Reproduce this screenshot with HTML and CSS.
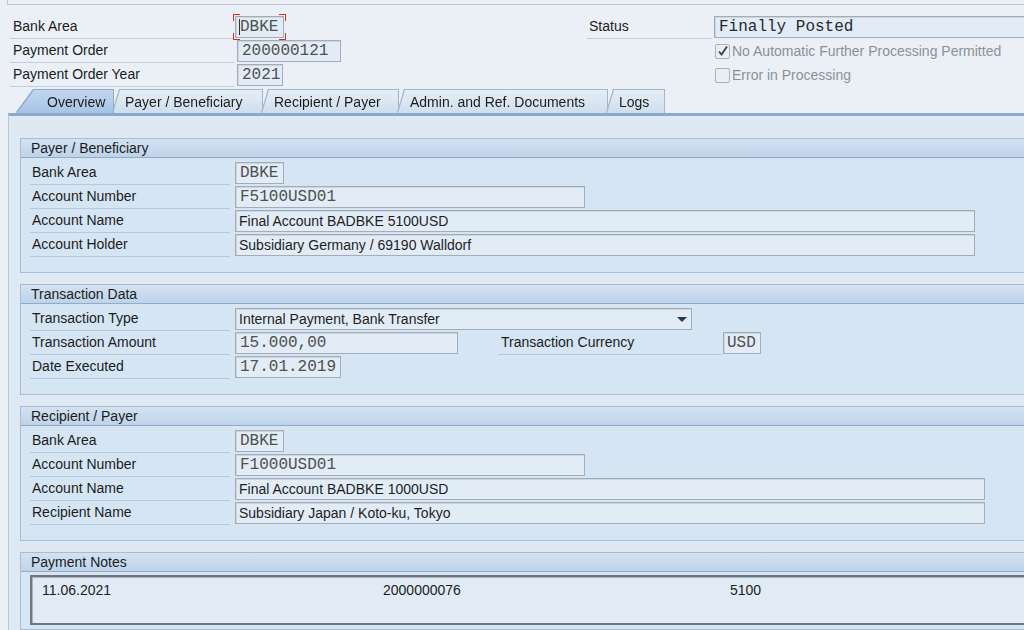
FILE: index.html
```html
<!DOCTYPE html>
<html>
<head>
	<meta charset="utf-8">
	<title>Payment Order</title>
	<link rel="stylesheet" href="styles.css">
</head>
<body>
	<div class="topbar"></div>
	<div class="header">
		<div class="hcol">
			<div class="hrow">
				<span class="hlabel">Bank Area</span>
				<span class="field mono w-area focus"><span class="caret"></span>DBKE</span>
			</div>
			<div class="hrow">
				<span class="hlabel">Payment Order</span>
				<span class="field mono w-order ml3">200000121</span>
			</div>
			<div class="hrow">
				<span class="hlabel">Payment Order Year</span>
				<span class="field mono w-year ml3">2021</span>
			</div>
		</div>
		<div class="hcol hcol-right">
			<div class="hrow">
				<span class="hlabel hlabel-status">Status</span>
				<span class="field mono w-status">Finally Posted</span>
			</div>
			<div class="hrow check">
				<span class="box">
					<svg width="12" height="12" viewBox="0 0 12 12"><path d="M2 6.5 L4.6 9.5 L10 1.5" fill="none" stroke="#3a3f47" stroke-width="1.8"/></svg>
				</span>
				No Automatic Further Processing Permitted
			</div>
			<div class="hrow check">
				<span class="box"></span>
				Error in Processing
			</div>
		</div>
	</div>

	<div class="tabs">
		<div class="tab active t-overview"><span>Overview</span></div>
		<div class="tab t-payer"><span>Payer / Beneficiary</span></div>
		<div class="tab t-recipient"><span>Recipient / Payer</span></div>
		<div class="tab t-admin"><span>Admin. and Ref. Documents</span></div>
		<div class="tab t-logs"><span>Logs</span></div>
	</div>

	<div class="panel">
		<div class="group">
			<div class="group-head">Payer / Beneficiary</div>
			<div class="group-body">
				<div class="frow">
					<span class="flabel">Bank Area</span>
					<span class="field mono w-area">DBKE</span>
				</div>
				<div class="frow">
					<span class="flabel">Account Number</span>
					<span class="field mono w-acc">F5100USD01</span>
				</div>
				<div class="frow">
					<span class="flabel">Account Name</span>
					<span class="field w-name">Final Account BADBKE 5100USD</span>
				</div>
				<div class="frow">
					<span class="flabel">Account Holder</span>
					<span class="field w-name">Subsidiary Germany / 69190 Walldorf</span>
				</div>
			</div>
		</div>

		<div class="group">
			<div class="group-head">Transaction Data</div>
			<div class="group-body">
				<div class="frow">
					<span class="flabel">Transaction Type</span>
					<span class="field w-type">Internal Payment, Bank Transfer<span class="arrow"></span></span>
				</div>
				<div class="frow">
					<span class="flabel">Transaction Amount</span>
					<span class="field mono w-amount">15.000,00</span>
					<span class="flabel flabel-cur">Transaction Currency</span>
					<span class="field mono w-cur">USD</span>
				</div>
				<div class="frow">
					<span class="flabel">Date Executed</span>
					<span class="field mono w-date">17.01.2019</span>
				</div>
			</div>
		</div>

		<div class="group">
			<div class="group-head">Recipient / Payer</div>
			<div class="group-body">
				<div class="frow">
					<span class="flabel">Bank Area</span>
					<span class="field mono w-area">DBKE</span>
				</div>
				<div class="frow">
					<span class="flabel">Account Number</span>
					<span class="field mono w-acc">F1000USD01</span>
				</div>
				<div class="frow">
					<span class="flabel">Account Name</span>
					<span class="field w-name2">Final Account BADBKE 1000USD</span>
				</div>
				<div class="frow">
					<span class="flabel">Recipient Name</span>
					<span class="field w-name2">Subsidiary Japan / Koto-ku, Tokyo</span>
				</div>
			</div>
		</div>

		<div class="group group-notes">
			<div class="group-head">Payment Notes</div>
			<div class="notes">
				<div class="notes-row">
					<span>11.06.2021</span>
					<span>2000000076</span>
					<span>5100</span>
				</div>
			</div>
		</div>
	</div>
</body>
</html>
```
FILE: styles.css
```css
* {
	margin: 0;
	padding: 0;
	box-sizing: border-box;
}
body {
	font-family: 'Liberation Sans', Arial, sans-serif;
	font-size: 14px;
	color: #1c1c1c;
	background-color: #eaf0f6;
	width: 1024px;
	height: 630px;
	overflow: hidden;
}
.topbar {
	height: 5px;
	margin-left: 7px;
	border-left: 1px solid #b9c5d1;
	border-bottom: 1px solid #b9c5d1;
}

/* header */
.header {
	display: flex;
	padding: 10px 0 0 10px;
}
.hcol {
	width: 577px;
	flex-shrink: 0;
}
.hcol-right {
	flex: 1;
	width: auto;
}
.hrow {
	display: flex;
	align-items: center;
	height: 24px;
}
.hlabel {
	width: 224px;
	height: 24px;
	line-height: 23px;
	padding-left: 3px;
	border-bottom: 1px solid #c4ced8;
	flex-shrink: 0;
}
.hlabel-status {
	width: 125px;
	padding-left: 2px;
}
.check {
	padding-left: 128px;
	color: #8b9097;
}
.box {
	display: flex;
	align-items: center;
	justify-content: center;
	width: 15px;
	height: 15px;
	margin-right: 2px;
	border: 1px solid #aab2bb;
	border-radius: 2px;
	background: #e9eef3;
}

/* input fields */
.field {
	display: flex;
	align-items: center;
	height: 22px;
	margin-left: 1px;
	padding: 0 3px;
	background: #e2ecf6;
	border: 1px solid #a4adb7;
	box-shadow: inset 1px 1px 0 #ccd5de;
	color: #1e1e1e;
	white-space: nowrap;
	overflow: hidden;
	flex-shrink: 0;
}
.mono {
	font-family: 'Liberation Mono', 'Courier New', monospace;
	font-size: 16px;
	color: #505050;
	padding-left: 4px;
}
.ml3 {
	margin-left: 3px;
}
.w-area { width: 49px; }
.w-order { width: 104px; }
.w-year { width: 46px; }
.w-status { width: 330px; color: #2a2a2a; margin-left: 2px; }
.w-acc { width: 350px; }
.w-name { width: 740px; }
.w-name2 { width: 750px; }
.w-type { width: 457px; justify-content: space-between; }
.w-amount { width: 223px; }
.w-cur { width: 38px; padding-left: 3px; }
.w-date { width: 106px; }

.focus {
	position: relative;
	overflow: visible;
}
.focus::after {
	content: "";
	position: absolute;
	top: -3px;
	left: -3px;
	right: -3px;
	bottom: -3px;
	background:
		linear-gradient(#dd2a20, #dd2a20) left top / 7px 1px no-repeat,
		linear-gradient(#dd2a20, #dd2a20) left top / 1px 7px no-repeat,
		linear-gradient(#dd2a20, #dd2a20) right top / 7px 1px no-repeat,
		linear-gradient(#dd2a20, #dd2a20) right top / 1px 7px no-repeat,
		linear-gradient(#dd2a20, #dd2a20) left bottom / 7px 1px no-repeat,
		linear-gradient(#dd2a20, #dd2a20) left bottom / 1px 7px no-repeat,
		linear-gradient(#dd2a20, #dd2a20) right bottom / 7px 1px no-repeat,
		linear-gradient(#dd2a20, #dd2a20) right bottom / 1px 7px no-repeat;
}
.caret {
	display: inline-block;
	width: 1px;
	height: 16px;
	margin-left: -1px;
	background: #333;
}
.arrow {
	width: 0;
	height: 0;
	margin-right: 1px;
	border-left: 5px solid transparent;
	border-right: 5px solid transparent;
	border-top: 5px solid #26395a;
}

/* tabs */
.tabs {
	display: flex;
	height: 23px;
	margin-top: 3px;
	padding-left: 17px;
}
.tab {
	filter: drop-shadow(1px 0 0 #a3b7cc) drop-shadow(-1px 0 0 #a3b7cc) drop-shadow(0 -1px 0 #a3b7cc);
}
.tab span {
	display: block;
	height: 23px;
	line-height: 25px;
	padding-left: 12px;
	background: linear-gradient(#e6eef6, #cfdeed);
	clip-path: polygon(0 100%, 7px 0, 100% 0, 100% 100%);
	white-space: nowrap;
}
.tab.active {
	filter: drop-shadow(1px 0 0 #8ea9ca) drop-shadow(-1px 0 0 #8ea9ca) drop-shadow(0 -1px 0 #8ea9ca);
	z-index: 1;
}
.tab.active span {
	padding-left: 30px;
	background: linear-gradient(#c2d7ee, #a7c3e4);
	clip-path: polygon(0 100%, 17px 0, 100% 0, 100% 100%);
}
.t-overview span { width: 96px; }
.t-payer span { width: 149px; }
.t-recipient span { width: 136px; }
.t-admin span { width: 209px; }
.t-logs span { width: 57px; }

/* tab panel */
.panel {
	margin-left: 8px;
	padding: 22px 0 0 11px;
	border-top: 3px solid #8ca8cc;
	border-left: 1px solid #b8c7d7;
	background: #dfe9f4;
	height: 520px;
}
.group {
	margin-bottom: 11px;
	border: 1px solid #a8bdd4;
	border-right: none;
	background: #d5e5f4;
}
.group-head {
	height: 19px;
	line-height: 18px;
	padding-left: 10px;
	background: linear-gradient(#d3e2f1, #bed3ea);
	border-bottom: 1px solid #93abc7;
}
.group-body {
	padding: 3px 0 15px 9px;
}
.frow {
	display: flex;
	align-items: center;
	height: 24px;
}
.flabel {
	width: 200px;
	height: 24px;
	line-height: 23px;
	padding-left: 2px;
	border-bottom: 1px solid #b9c8d8;
	flex-shrink: 0;
}
.frow .field {
	margin-left: 5px;
}
.frow .flabel-cur {
	width: 224px;
	margin-left: 40px;
	padding-left: 3px;
}
.frow .w-cur {
	margin-left: 1px;
}

/* payment notes */
.group-notes {
	padding-bottom: 4px;
}
.notes {
	height: 50px;
	margin: 3px 0 0 9px;
	padding: 5px 0 0 10px;
	border: 2px solid #6e7781;
	border-right: none;
	box-shadow: inset 1px 1px 0 #aab3bd;
	background: #e1ebf5;
}
.notes-row {
	display: grid;
	grid-template-columns: 341px 347px auto;
}
```
